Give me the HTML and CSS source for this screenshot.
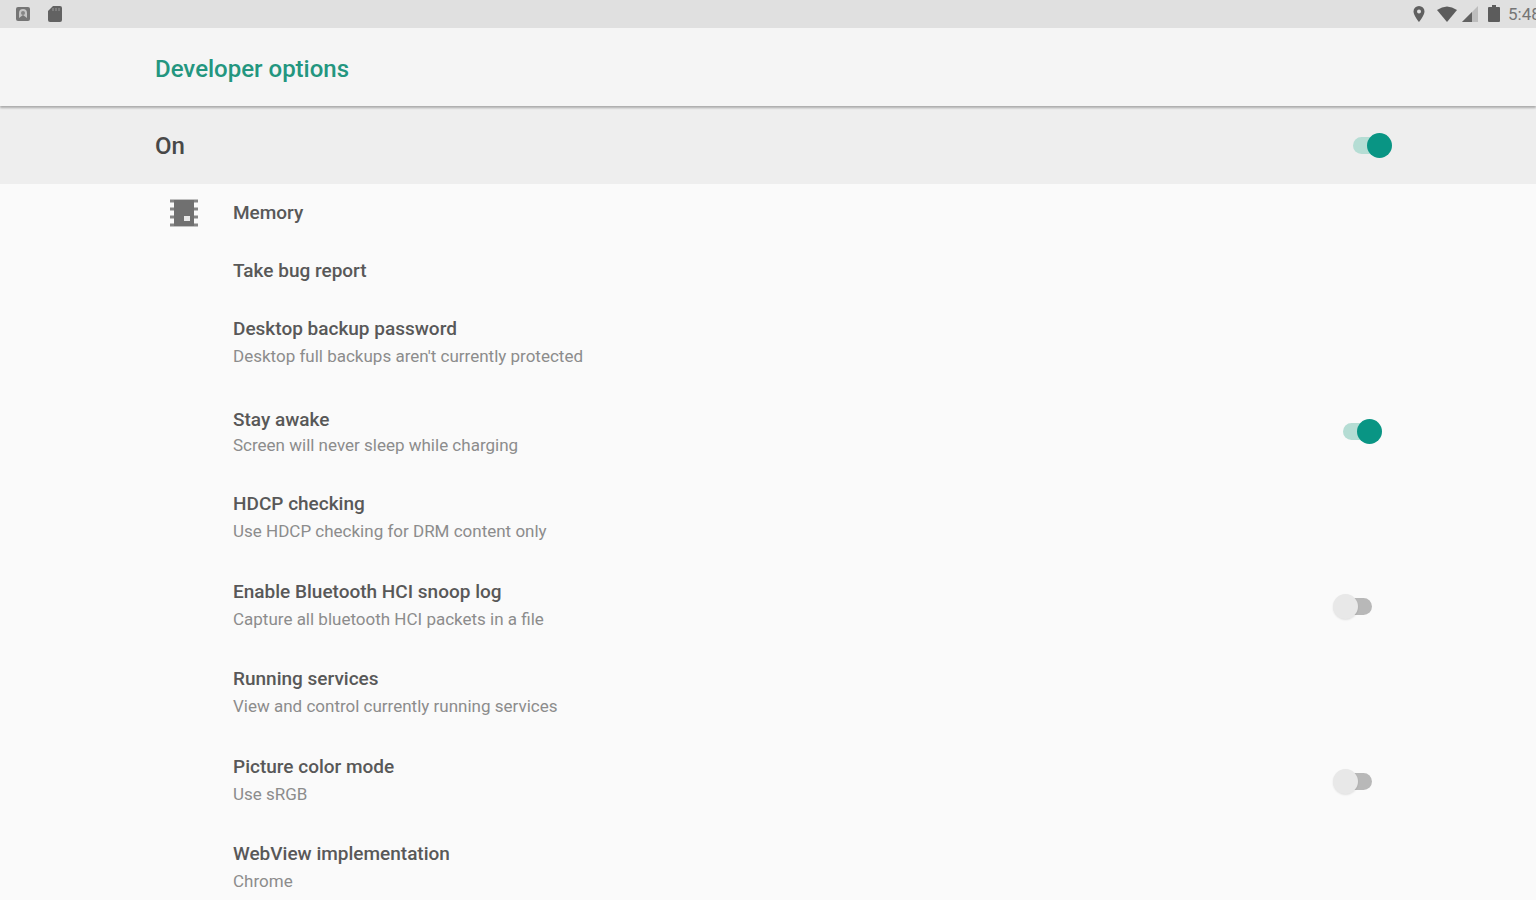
FILE: index.html
```html
<!DOCTYPE html>
<html lang="en">
<head>
    <meta charset="UTF-8">
    <meta name="viewport" content="width=device-width, initial-scale=1.0">
    <title>Developer options</title>
    <link rel="stylesheet" href="styles.css">
</head>
<body>
    <!-- System status bar -->
    <div class="status-bar">
        <div class="status-left">
            <svg width="16" height="16" viewBox="0 0 16 16">
                <rect x="1" y="1" width="14" height="14" rx="2" fill="#757575"/>
                <path d="M4 12V7a4 4 0 0 1 8 0v5L8 9z" fill="#c4c4c4"/>
                <circle cx="8" cy="7" r="2" fill="#858585"/>
            </svg>
            <svg width="16" height="18" viewBox="0 0 16 18">
                <path d="M6 1h7a2 2 0 0 1 2 2v12a2 2 0 0 1-2 2H3a2 2 0 0 1-2-2V6z" fill="#626262"/>
                <path d="M6 3v3M9 3v3M12 3v3" stroke="#999" stroke-width="1"/>
            </svg>
        </div>
        <div class="status-right">
            <svg class="pin" width="12" height="18" viewBox="0 0 12 18">
                <path d="M6 1a5.5 5.5 0 0 0-5.5 5.5C.5 10.5 6 17 6 17s5.5-6.5 5.5-10.5A5.5 5.5 0 0 0 6 1zm0 3.500a2 2 0 1 1 0 4 2 2 0 0 1 0-4z" fill="#606060"/>
            </svg>
            <svg class="wifi" width="20" height="16" viewBox="0 0 20 16">
                <path d="M0 4Q10-3 20 4L10 16z" fill="#5c5c5c"/>
            </svg>
            <svg class="signal" width="16" height="16" viewBox="0 0 16 16">
                <path d="M0 16L16 0v16z" fill="#bdbdbd"/>
                <path d="M0 16L10 6v10z" fill="#626262"/>
            </svg>
            <svg class="battery" width="12" height="18" viewBox="0 0 12 18">
                <path d="M4 0h4v2h3a1 1 0 0 1 1 1v13a1 1 0 0 1-1 1H1a1 1 0 0 1-1-1V3a1 1 0 0 1 1-1h3z" fill="#5c5c5c"/>
            </svg>
            <span class="clock">5:48</span>
        </div>
    </div>

    <header class="app-bar">
        <h1>Developer options</h1>
    </header>

    <label class="master-switch">
        <span>On</span>
        <input type="checkbox" class="switch" checked>
    </label>

    <main class="options">
        <a class="option" href="#memory">
            <svg class="option-icon" width="30" height="28" viewBox="0 0 30 28">
                <path d="M1 2h28M1 10h28M1 18h28M1 26h28" stroke="#858585" stroke-width="3"/>
                <rect x="5" y="1" width="20" height="26" fill="#707070"/>
                <rect x="15" y="17" width="6" height="5" fill="#e8e8e8"/>
            </svg>
            <span class="title">Memory</span>
        </a>
        <a class="option" href="#bug-report">
            <span class="title">Take bug report</span>
        </a>
        <a class="option two-line" href="#backup-password">
            <span class="text">
                <span class="title">Desktop backup password</span>
                <span class="summary">Desktop full backups aren't currently protected</span>
            </span>
        </a>
        <label class="option two-line toggle compact">
            <span class="text">
                <span class="title">Stay awake</span>
                <span class="summary">Screen will never sleep while charging</span>
            </span>
            <input type="checkbox" class="switch" checked>
        </label>
        <a class="option two-line" href="#hdcp">
            <span class="text">
                <span class="title">HDCP checking</span>
                <span class="summary">Use HDCP checking for DRM content only</span>
            </span>
        </a>
        <label class="option two-line toggle">
            <span class="text">
                <span class="title">Enable Bluetooth HCI snoop log</span>
                <span class="summary">Capture all bluetooth HCI packets in a file</span>
            </span>
            <input type="checkbox" class="switch">
        </label>
        <a class="option two-line" href="#services">
            <span class="text">
                <span class="title">Running services</span>
                <span class="summary">View and control currently running services</span>
            </span>
        </a>
        <label class="option two-line toggle">
            <span class="text">
                <span class="title">Picture color mode</span>
                <span class="summary">Use sRGB</span>
            </span>
            <input type="checkbox" class="switch">
        </label>
        <a class="option two-line" href="#webview">
            <span class="text">
                <span class="title">WebView implementation</span>
                <span class="summary">Chrome</span>
            </span>
        </a>
    </main>
</body>
</html>
```

FILE: styles.css
```css
* {
    box-sizing: border-box;
}

body {
    font-family: Roboto, sans-serif;
    background-color: #fafafa;
    color: #585858;
    margin: 0;
    height: 100vh;
    overflow: hidden;
}

.status-bar {
    display: flex;
    justify-content: space-between;
    align-items: center;
    height: 28px;
    padding-left: 15px;
    background-color: #e0e0e0;
}

.status-left,
.status-right {
    display: flex;
    align-items: center;
}

.status-left {
    gap: 16px;
}

.pin {
    margin-right: 12px;
}

.wifi {
    margin-right: 5px;
}

.signal {
    margin-right: 10px;
}

.battery {
    margin-right: 8px;
}

.clock {
    width: 28px;
    overflow: hidden;
    white-space: nowrap;
    font-size: 17px;
    color: #757575;
}

.app-bar {
    display: flex;
    align-items: center;
    height: 78px;
    padding: 4px 155px 0;
    background-color: #f5f5f5;
    position: relative;
    box-shadow: 0 2px 2px rgba(0, 0, 0, 0.28);
}

h1 {
    margin: 0;
    font-size: 24px;
    font-weight: 500;
    line-height: 32px;
    color: #23967f;
}

.master-switch {
    display: flex;
    justify-content: space-between;
    align-items: center;
    height: 78px;
    padding: 0 144px 0 155px;
    background-color: #eee;
    font-size: 24px;
    font-weight: 500;
    color: #484848;
    cursor: pointer;
}

.master-switch span {
    padding-top: 2px;
}

.option {
    display: flex;
    align-items: center;
    height: 58px;
    padding: 0 154px 0 233px;
    color: inherit;
    text-decoration: none;
}

.option-icon {
    margin-left: -64px;
    margin-right: 34px;
}

.two-line {
    height: 87px;
}

.toggle {
    height: 88px;
    justify-content: space-between;
    cursor: pointer;
}

.text {
    display: flex;
    flex-direction: column;
    gap: 3px;
    padding-bottom: 2px;
}

.title {
    font-size: 19px;
    font-weight: 500;
    line-height: 24px;
}

.summary {
    font-size: 17px;
    line-height: 24px;
    color: #8c8c8c;
}

.compact .text {
    gap: 1px;
    padding-top: 4px;
}

/* Track is the ::before, thumb is the ::after */
.switch {
    appearance: none;
    display: grid;
    align-items: center;
    width: 49px;
    height: 25px;
    margin: 0;
    cursor: pointer;
}

.switch::before,
.switch::after {
    content: "";
    grid-area: 1 / 1;
}

.switch::before {
    width: 29px;
    height: 17px;
    justify-self: center;
    border-radius: 9px;
    background-color: #b8b8b8;
}

.switch::after {
    width: 25px;
    height: 25px;
    justify-self: start;
    border-radius: 50%;
    background-color: #e8e8e8;
    box-shadow: 0 1px 2px rgba(0, 0, 0, 0.1);
}

.switch:checked::before {
    background-color: #b5ddd4;
}

.switch:checked::after {
    justify-self: end;
    background-color: #099584;
    box-shadow: none;
}
```
